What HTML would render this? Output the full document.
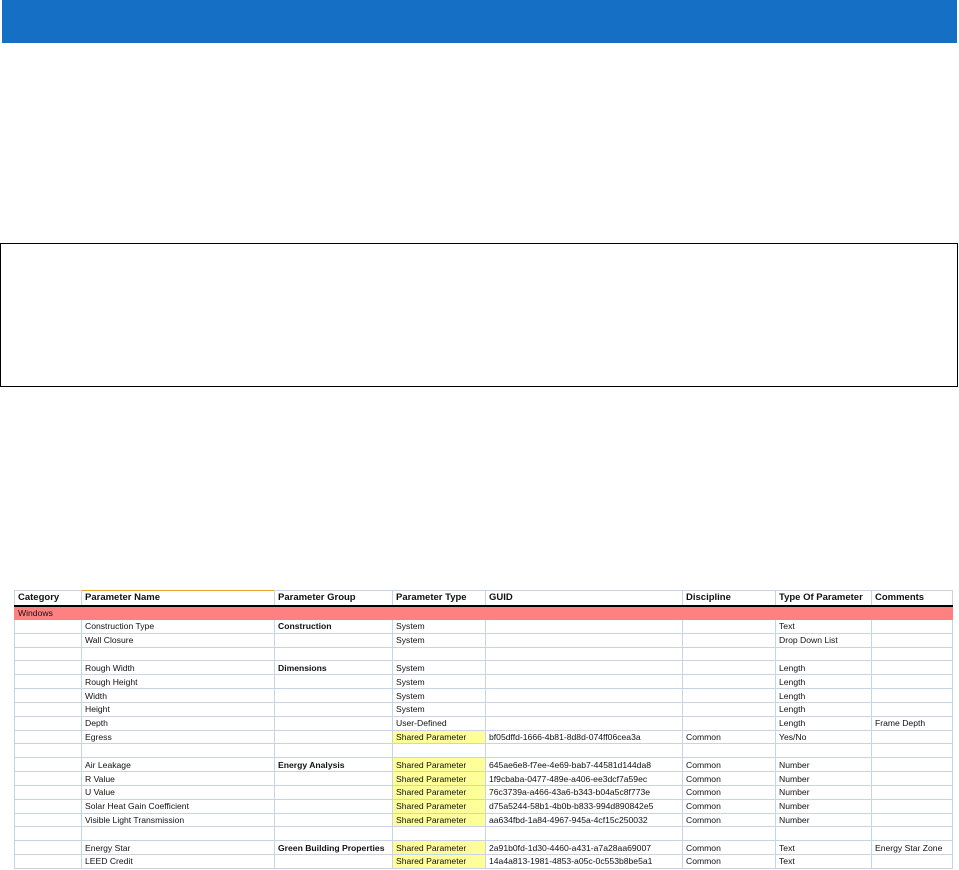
<!DOCTYPE html>
<html><head><style>
body{margin:0;width:959px;height:870px;background:#fff;position:relative;overflow:hidden;font-family:"Liberation Sans",sans-serif}
.bar{position:absolute;left:2px;top:0;width:955px;height:43px;background:#1570c5}
.box{position:absolute;left:0;top:243px;width:956px;height:142px;border:1px solid #000}
table{position:absolute;left:14px;top:590px;border-collapse:collapse;table-layout:fixed;font-size:8.6px;color:#111}
td{border:1px solid #c8d3e3;padding:0 0 0 3px;height:12.83px;line-height:12px;white-space:nowrap;overflow:hidden}
tr.h td{font-weight:bold;font-size:9.5px;height:14px;border-bottom:2px solid #000}
tr.h td.o{border-top:1px solid #f0a030}
tr.w td{background:#ff8080;height:12px;border-color:#ff8080}
.b{font-weight:bold}
.y{background:#ffff99}
</style></head><body>
<div class="bar"></div>
<div class="box"></div>
<table>
<colgroup><col style="width:67px"><col style="width:193px"><col style="width:118px"><col style="width:93px"><col style="width:197px"><col style="width:93px"><col style="width:96px"><col style="width:81px"></colgroup>
<tr class="h"><td>Category</td><td class="o">Parameter Name</td><td>Parameter Group</td><td>Parameter Type</td><td>GUID</td><td>Discipline</td><td>Type Of Parameter</td><td>Comments</td></tr>
<tr class="w"><td>Windows</td><td></td><td></td><td></td><td></td><td></td><td></td><td></td></tr>
<tr><td></td><td>Construction Type</td><td class="b">Construction</td><td>System</td><td></td><td></td><td>Text</td><td></td></tr>
<tr><td></td><td>Wall Closure</td><td></td><td>System</td><td></td><td></td><td>Drop Down List</td><td></td></tr>
<tr><td></td><td></td><td></td><td></td><td></td><td></td><td></td><td></td></tr>
<tr><td></td><td>Rough Width</td><td class="b">Dimensions</td><td>System</td><td></td><td></td><td>Length</td><td></td></tr>
<tr><td></td><td>Rough Height</td><td></td><td>System</td><td></td><td></td><td>Length</td><td></td></tr>
<tr><td></td><td>Width</td><td></td><td>System</td><td></td><td></td><td>Length</td><td></td></tr>
<tr><td></td><td>Height</td><td></td><td>System</td><td></td><td></td><td>Length</td><td></td></tr>
<tr><td></td><td>Depth</td><td></td><td>User-Defined</td><td></td><td></td><td>Length</td><td>Frame Depth</td></tr>
<tr><td></td><td>Egress</td><td></td><td class="y">Shared Parameter</td><td>bf05dffd-1666-4b81-8d8d-074ff06cea3a</td><td>Common</td><td>Yes/No</td><td></td></tr>
<tr><td></td><td></td><td></td><td></td><td></td><td></td><td></td><td></td></tr>
<tr><td></td><td>Air Leakage</td><td class="b">Energy Analysis</td><td class="y">Shared Parameter</td><td>645ae6e8-f7ee-4e69-bab7-44581d144da8</td><td>Common</td><td>Number</td><td></td></tr>
<tr><td></td><td>R Value</td><td></td><td class="y">Shared Parameter</td><td>1f9cbaba-0477-489e-a406-ee3dcf7a59ec</td><td>Common</td><td>Number</td><td></td></tr>
<tr><td></td><td>U Value</td><td></td><td class="y">Shared Parameter</td><td>76c3739a-a466-43a6-b343-b04a5c8f773e</td><td>Common</td><td>Number</td><td></td></tr>
<tr><td></td><td>Solar Heat Gain Coefficient</td><td></td><td class="y">Shared Parameter</td><td>d75a5244-58b1-4b0b-b833-994d890842e5</td><td>Common</td><td>Number</td><td></td></tr>
<tr><td></td><td>Visible Light Transmission</td><td></td><td class="y">Shared Parameter</td><td>aa634fbd-1a84-4967-945a-4cf15c250032</td><td>Common</td><td>Number</td><td></td></tr>
<tr><td></td><td></td><td></td><td></td><td></td><td></td><td></td><td></td></tr>
<tr><td></td><td>Energy Star</td><td class="b">Green Building Properties</td><td class="y">Shared Parameter</td><td>2a91b0fd-1d30-4460-a431-a7a28aa69007</td><td>Common</td><td>Text</td><td>Energy Star Zone</td></tr>
<tr><td></td><td>LEED Credit</td><td></td><td class="y">Shared Parameter</td><td>14a4a813-1981-4853-a05c-0c553b8be5a1</td><td>Common</td><td>Text</td><td></td></tr>
</table>
</body></html>
